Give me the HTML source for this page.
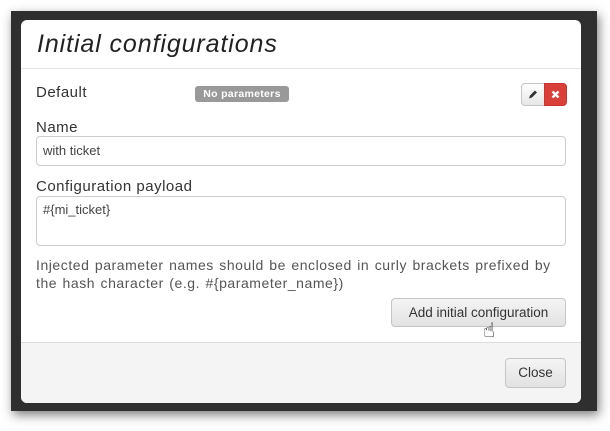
<!DOCTYPE html>
<html><head><style>
body{margin:0;width:610px;height:431px;background:#fff;position:relative;overflow:hidden;font-family:"Liberation Sans","DejaVu Sans",sans-serif;color:#333}
.frame{position:absolute;left:11px;top:11px;width:586px;height:400px;background:#2f2f2f;box-shadow:2px 4px 10px rgba(0,0,0,.5)}
.modal{position:absolute;left:21px;top:20px;width:560px;height:383px;background:#fff;border-radius:6px;overflow:hidden}
.abs{position:absolute;white-space:nowrap}
h1{position:absolute;left:16px;top:10px;margin:0;font-size:25px;font-style:italic;font-weight:normal;color:#222;letter-spacing:.9px}
.hr{position:absolute;left:0;width:560px;height:1px;background:#e5e5e5}
.lbl{font-size:15px;color:#333;letter-spacing:.5px}
.input{position:absolute;left:15px;width:528px;border:1px solid #ccc;border-radius:4px;background:#fff;font-size:13px;color:#444}
.badge{position:absolute;left:174px;top:66px;width:94px;height:16px;background:#999;border-radius:3px;color:#fff;font-size:10.5px;font-weight:bold;text-align:center;line-height:16px;letter-spacing:.3px}
.btn{position:absolute;border:1px solid #c5c5c5;border-radius:4px;background:linear-gradient(#f4f4f4,#e2e2e2);font-size:13.5px;color:#333;text-align:center}
</style></head><body>
<div class="abs" style="left:11px;top:24px;width:10px;height:26px;background:#0d2a3a"></div>
<div class="frame"></div>
<div class="modal">
 <h1>Initial configurations</h1>
 <div class="hr" style="top:48px"></div>
 <div class="abs lbl" style="left:15px;top:64px">Default</div>
 <div class="badge">No parameters</div>
 <div class="btn" style="left:500px;top:63px;width:22px;height:21px;border-radius:4px 0 0 4px;background:linear-gradient(#fff,#e6e6e6)">
  <svg width="22" height="21" viewBox="0 0 22 21"><path d="M7 14.5l1-3 5-5 2 2-5 5z" fill="#333"/></svg></div>
 <div class="btn" style="left:523px;top:63px;width:21px;height:21px;border-radius:0 4px 4px 0;background:#d9403a;border-color:#c33">
  <svg width="21" height="21" viewBox="0 0 21 21"><path d="M7.5 7.5l6 6M13.5 7.5l-6 6" stroke="#fff" stroke-width="2.4"/></svg></div>
 <div class="abs lbl" style="left:15px;top:99px">Name</div>
 <div class="input" style="top:116px;height:28px;line-height:28px;text-indent:6px">with ticket</div>
 <div class="abs lbl" style="left:15px;top:158px">Configuration payload</div>
 <div class="input" style="top:176px;height:48px"><div style="padding:5px 0 0 6px">#{mi_ticket}</div></div>
 <div class="abs" style="left:15px;top:236px;font-size:14px;color:#555;line-height:18px;letter-spacing:.55px;word-spacing:1px">Injected parameter names should be enclosed in curly brackets prefixed by<br>the hash character (e.g. #{parameter_name})</div>
 <div class="btn" style="left:370px;top:278px;width:173px;height:27px;line-height:27px">Add initial configuration</div>
 <div class="abs" style="left:462px;top:298px;font-size:20px;color:#000">☝</div>
 <div class="hr" style="top:322px;background:#ddd"></div>
 <div class="abs" style="left:0;top:323px;width:560px;height:60px;background:#f4f4f4"></div>
 <div class="btn" style="left:484px;top:338px;width:59px;height:28px;line-height:28px">Close</div>
</div>
</body></html>
